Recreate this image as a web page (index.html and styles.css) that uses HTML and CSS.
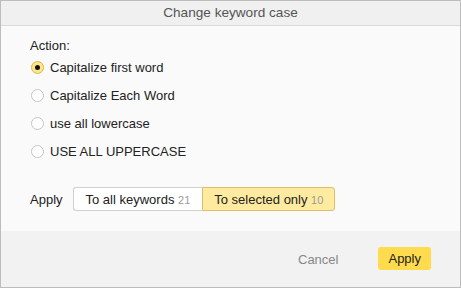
FILE: index.html
```html
<!DOCTYPE html>
<html lang="en">
<head>
    <meta charset="UTF-8" />
    <title>Change keyword case</title>
    <link rel="stylesheet" href="styles.css">
</head>
<body>
    <div class="dialog">
        <header class="dialog-header">Change keyword case</header>

        <div class="dialog-body">
            <div class="label">Action:</div>
            <ul class="options">
                <li class="option checked"><span class="radio"></span>Capitalize first word</li>
                <li class="option"><span class="radio"></span>Capitalize Each Word</li>
                <li class="option"><span class="radio"></span>use all lowercase</li>
                <li class="option"><span class="radio"></span>USE ALL UPPERCASE</li>
            </ul>

            <div class="apply-row">
                <span class="apply-label">Apply</span>
                <div class="segmented">
                    <button class="segment">To all keywords <span class="count">21</span></button>
                    <button class="segment active">To selected only <span class="count">10</span></button>
                </div>
            </div>
        </div>

        <footer class="dialog-footer">
            <button class="btn-cancel">Cancel</button>
            <button class="btn-apply">Apply</button>
        </footer>
    </div>
</body>
</html>
```

FILE: styles.css
```css
* {
    margin: 0;
    padding: 0;
    box-sizing: border-box;
}

body {
    font-family: "Liberation Sans", Arial, sans-serif;
    font-size: 13px;
    color: #222;
    background-color: #fff;
}

.dialog {
    width: 461px;
    height: 288px;
    border: 1px solid #bdbdbd;
    display: flex;
    flex-direction: column;
    background-color: #fafafa;
}

.dialog-header {
    height: 25px;
    line-height: 24px;
    text-align: center;
    color: #555;
    font-size: 13.6px;
    background-color: #f0f0f0;
    border-bottom: 1px solid #d9d9d9;
}

.dialog-body {
    flex-grow: 1;
    padding: 12px 29px 0;
}

.label {
    line-height: 16px;
}

.options {
    list-style: none;
    margin-top: -1px;
}

.option {
    display: flex;
    align-items: center;
    height: 28px;
    color: #222;
}

.radio {
    width: 13px;
    height: 13px;
    border-radius: 50%;
    border: 1px solid #c4c4c4;
    background-color: #fff;
    margin-right: 6px;
    margin-left: 1px;
    display: flex;
    justify-content: center;
    align-items: center;
}

.option.checked .radio {
    background-color: #fde58c;
    border-color: #d9b94e;
}

.option.checked .radio::after {
    content: "";
    width: 5px;
    height: 5px;
    border-radius: 50%;
    background-color: #111;
}

.apply-row {
    display: flex;
    align-items: center;
    margin-top: 22px;
}

.apply-label {
    margin-right: 10px;
}

.segmented {
    display: flex;
}

.segment {
    font-family: inherit;
    font-size: 13px;
    color: #222;
    height: 24px;
    padding: 0 12px;
    border: 1px solid #d0d0d0;
    background-color: #fff;
    cursor: pointer;
}

.segment:first-child {
    border-radius: 3px 0 0 3px;
    border-right: none;
}

.segment:last-child {
    border-radius: 0 3px 3px 0;
    padding: 0 11px;
}

.segment.active {
    background-color: #ffeba0;
    border-color: #d9c070;
}

.count {
    color: #999;
    font-size: 11px;
}

.dialog-footer {
    height: 56px;
    background-color: #f2f2f2;
    display: flex;
    justify-content: flex-end;
    align-items: center;
    padding-right: 29px;
    gap: 40px;
}

.btn-cancel {
    font-family: inherit;
    font-size: 13px;
    color: #888;
    background: none;
    border: none;
    cursor: pointer;
}

.btn-apply {
    font-family: inherit;
    font-size: 13px;
    color: #222;
    background-color: #ffdb4d;
    border: none;
    border-radius: 3px;
    height: 23px;
    padding: 0 10px;
    margin-top: -2px;
    cursor: pointer;
}
```
